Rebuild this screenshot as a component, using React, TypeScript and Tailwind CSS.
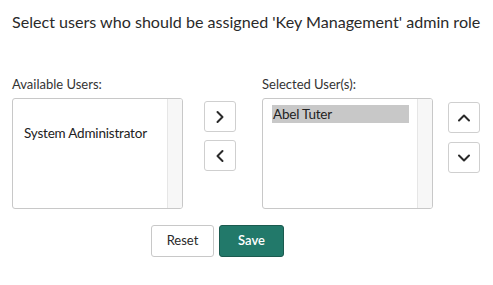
import { ChevronRight, ChevronLeft, ChevronUp, ChevronDown } from 'lucide-react';

const font = { fontFamily: '"Lato", "Liberation Sans", sans-serif' };

const ArrowButton = ({ children }: { children: React.ReactNode }) => (
  <button className="flex h-[31px] w-[32px] items-center justify-center rounded-[3px] border border-[#cfcfcf] bg-white text-[#2a2a2a]">
    {children}
  </button>
);

const ListBox = ({ children }: { children: React.ReactNode }) => (
  <div className="flex h-[111px] w-[171px] overflow-hidden rounded-[3px] border border-[#c8c8c8] bg-white">
    <div className="flex-1">{children}</div>
    <div className="w-[15px] border-l border-[#e6e6e6] bg-[#f7f7f7]" />
  </div>
);

export default function App() {
  return (
    <div className="h-[285px] w-[493px] bg-white px-3 pt-[10px] text-[#2e2e2e]" style={font}>
      <h1 className="whitespace-nowrap text-[16.1px] leading-6 text-[#2a2a2a]">
        Select users who should be assigned 'Key Management' admin role
      </h1>

      <div className="mt-[42px] flex">
        <div className="flex flex-col">
          <label className="text-[13px] leading-4 text-[#333]">Available Users:</label>
          <div className="mt-[6px]">
            <ListBox>
              <div className="pl-[11px] pt-[25px] text-[13.5px] leading-[18px] tracking-[-0.2px] text-[#222]">
                System Administrator
              </div>
            </ListBox>
          </div>
        </div>

        <div className="ml-[21px] mt-[25px] flex flex-col gap-[8px]">
          <ArrowButton>
            <ChevronRight size={20} strokeWidth={2.4} />
          </ArrowButton>
          <ArrowButton>
            <ChevronLeft size={20} strokeWidth={2.4} />
          </ArrowButton>
        </div>

        <div className="ml-[26px] flex flex-col">
          <label className="text-[13px] leading-4 text-[#333]">Selected User(s):</label>
          <div className="mt-[6px]">
            <ListBox>
              <div className="ml-[9px] mt-[6px] w-[137px] bg-[#c8c8c8] pl-[1px] text-[13.5px] leading-[18px] tracking-[-0.2px] text-[#222]">
                Abel Tuter
              </div>
            </ListBox>
          </div>
        </div>

        <div className="ml-[15px] mt-[26px] flex flex-col gap-[9px]">
          <ArrowButton>
            <ChevronUp size={20} strokeWidth={2.4} />
          </ArrowButton>
          <ArrowButton>
            <ChevronDown size={20} strokeWidth={2.4} />
          </ArrowButton>
        </div>
      </div>

      <div className="ml-[139px] mt-[16px] flex gap-[5px]">
        <button className="h-[32px] w-[63px] rounded-[3px] border border-[#c8c8c8] bg-white text-[13px] text-[#2a2a2a]">
          Reset
        </button>
        <button className="h-[32px] w-[65px] rounded-[3px] border border-[#1b5a4f] bg-[#22796a] text-[13px] font-semibold text-white">
          Save
        </button>
      </div>
    </div>
  );
}
